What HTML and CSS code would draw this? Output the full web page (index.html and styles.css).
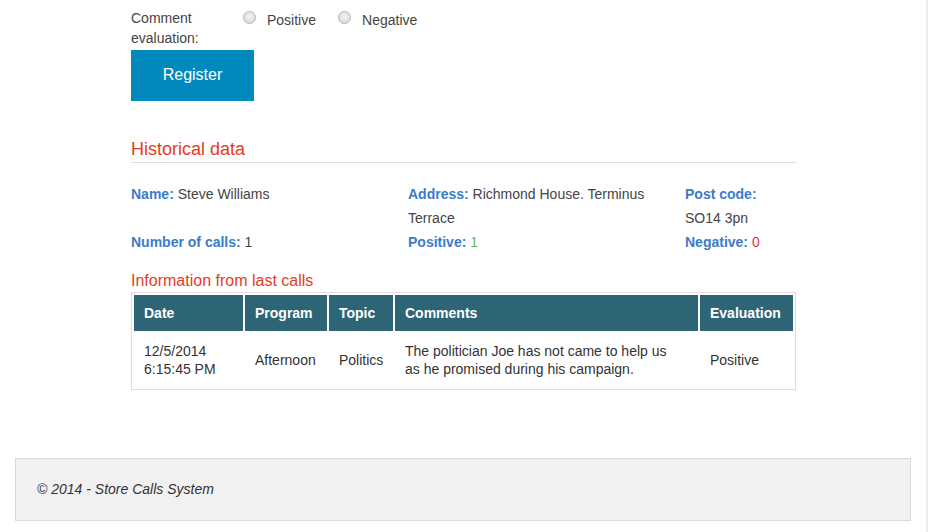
FILE: index.html
```html
<!DOCTYPE html>
<html>
<head>
<meta charset="utf-8">
<link rel="stylesheet" href="styles.css">
</head>
<body>
<div class="page">
  <div class="main">
    <div class="eval-row">
      <div class="eval-label">Comment evaluation:</div>
      <label class="radio"><span class="dot"></span>Positive</label>
      <label class="radio"><span class="dot"></span>Negative</label>
    </div>
    <button class="btn">Register</button>

    <h2 class="section-title">Historical data</h2>
    <div class="info-grid">
      <div><b>Name:</b> Steve Williams</div>
      <div><b>Address:</b> Richmond House. Terminus Terrace</div>
      <div><b>Post code:</b> SO14 3pn</div>
      <div><b>Number of calls:</b> 1</div>
      <div><b>Positive:</b> <span class="pos">1</span></div>
      <div><b>Negative:</b> <span class="neg">0</span></div>
    </div>

    <h3 class="sub-title">Information from last calls</h3>
    <table class="calls">
      <thead>
        <tr>
          <th class="c-date">Date</th>
          <th class="c-prog">Program</th>
          <th class="c-topic">Topic</th>
          <th class="c-comm">Comments</th>
          <th class="c-eval">Evaluation</th>
        </tr>
      </thead>
      <tbody>
        <tr>
          <td>12/5/2014<br>6:15:45 PM</td>
          <td>Afternoon</td>
          <td>Politics</td>
          <td class="comment">The politician Joe has not came to help us as he promised during his campaign.</td>
          <td>Positive</td>
        </tr>
      </tbody>
    </table>
  </div>

  <footer class="footer">© 2014 - Store Calls System</footer>
</div>
</body>
</html>
```

FILE: styles.css
```css
html, body {
  margin: 0;
  padding: 0;
  background: #fff;
}
body {
  font-family: "Liberation Sans", Arial, sans-serif;
  font-size: 14px;
  color: #444;
}
.page {
  width: 926px;
  min-height: 532px;
  border-right: 2px solid #ececec;
  overflow: hidden;
}
.main {
  width: 665px;
  margin-left: 131px;
  padding-top: 8px;
}
.eval-row {
  display: flex;
  align-items: flex-start;
  line-height: 20px;
}
.eval-label {
  width: 100px;
  margin-right: 12px;
}
.radio {
  display: flex;
  align-items: center;
  height: 20px;
  margin-top: 2px;
  margin-right: 22px;
}
.dot {
  width: 11px;
  height: 11px;
  border-radius: 50%;
  border: 1px solid #b5b5b5;
  background: radial-gradient(circle at 50% 40%, #f4f4f4 0%, #dcdcdc 70%, #cfcfcf 100%);
  margin-right: 11px;
  margin-top: -5px;
}
.btn {
  display: block;
  margin-top: 2px;
  width: 123px;
  height: 51px;
  border: 0;
  background: #0189be;
  color: #fff;
  font-family: "Liberation Sans", Arial, sans-serif;
  font-size: 16px;
  padding: 0 0 2px;
}
.section-title {
  margin: 36px 0 0;
  font-size: 18px;
  font-weight: normal;
  color: #e53c1e;
  line-height: 24px;
  padding-bottom: 1px;
  border-bottom: 1px solid #dedede;
}
.info-grid {
  display: grid;
  grid-template-columns: 277px 277px 111px;
  line-height: 24px;
  margin-top: 19px;
}
.info-grid b {
  color: #3b7cc9;
}
.pos { color: #5cb85c; }
.neg { color: #d9334f; }
.sub-title {
  margin: 17px 0 0;
  font-size: 16px;
  font-weight: normal;
  color: #e53c1e;
  line-height: 20px;
}
.calls {
  width: 665px;
  border: 1px solid #dcdcdc;
  border-spacing: 2px;
  margin-top: 1px;
  table-layout: fixed;
}
.calls th {
  background: #2e6576;
  color: #fff;
  font-weight: bold;
  text-align: left;
  padding: 9px 10px;
  line-height: 18px;
}
.calls td {
  padding: 9px 10px;
  line-height: 18px;
  vertical-align: middle;
  color: #333;
}
.calls td.comment {
  padding-right: 22px;
}
.c-date { width: 89px; }
.c-prog { width: 62px; }
.c-topic { width: 44px; }
.c-comm { width: 283px; }
.c-eval { width: 73px; }
.footer {
  width: 852px;
  margin: 68px 0 0 15px;
  background: #f1f1f1;
  border: 1px solid #dadada;
  padding: 21px 21px 21px;
  line-height: 19px;
  font-style: italic;
  color: #333;
}
```
